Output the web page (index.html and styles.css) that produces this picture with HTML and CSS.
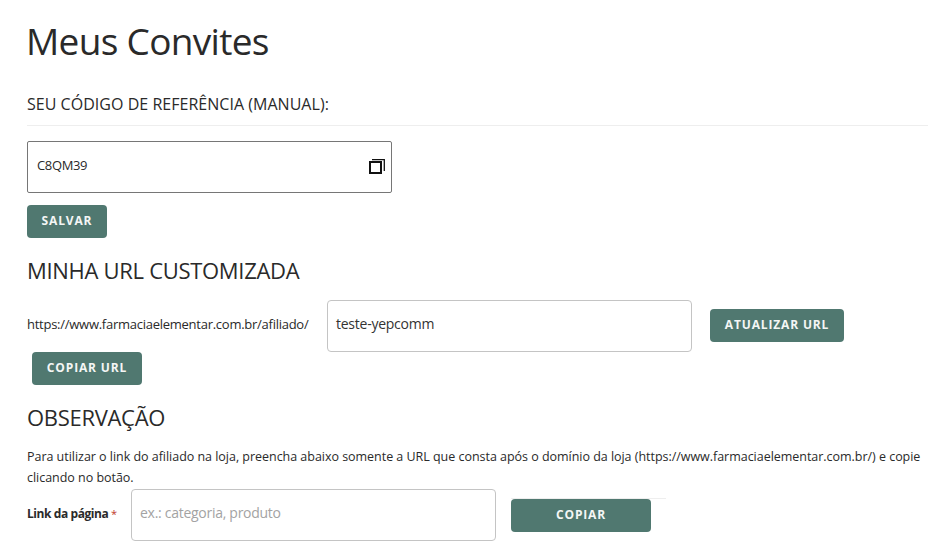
FILE: index.html
```html
<!DOCTYPE html>
<html lang="pt-BR">
<head>
<meta charset="utf-8">
<title>Meus Convites</title>
<link rel="stylesheet" href="styles.css">
</head>
<body>
<main class="page">
  <h1 class="title">Meus Convites</h1>
  <h2 class="label-head">SEU CÓDIGO DE REFERÊNCIA (MANUAL):</h2>
  <div class="code-box">
    <span class="code-text">C8QM39</span>
    <svg class="copy-icon" width="16" height="16" viewBox="0 0 16 16" aria-hidden="true">
      <path d="M1 3h11v11H1z" fill="none" stroke="#111" stroke-width="2"/>
      <path d="M3 .7h12.300V12" fill="none" stroke="#111" stroke-width="1.300"/>
    </svg>
  </div>
  <button class="btn btn-save">SALVAR</button>
  <h2 class="section-head first">MINHA URL CUSTOMIZADA</h2>
  <div class="url-row">
    <span class="url-base">https://www.farmaciaelementar.com.br/afiliado/</span>
    <div class="field url-field"><span class="value">teste-yepcomm</span></div>
    <button class="btn btn-update">ATUALIZAR URL</button>
  </div>
  <button class="btn btn-copy-url">COPIAR URL</button>
  <h2 class="section-head second">OBSERVAÇÃO</h2>
  <p class="note">Para utilizar o link do afiliado na loja, preencha abaixo somente a URL que consta após o domínio da loja (https://www.farmaciaelementar.com.br/) e copie clicando no botão.</p>
  <div class="link-row">
    <label class="link-label">Link da página <span class="req">*</span></label>
    <div class="field link-field"><span class="placeholder">ex.: categoria, produto</span></div>
    <div class="copy-wrap"><button class="btn btn-copy">COPIAR</button></div>
  </div>
</main>
</body>
</html>
```
FILE: styles.css
```css
* { box-sizing: border-box; }
html, body { margin: 0; padding: 0; background: #fff; }
body {
  font-family: "Open Sans", "Noto Sans", "Liberation Sans", sans-serif;
  color: #2a2a2a;
  overflow: hidden;
}
.page { width: 928px; height: 547px; padding: 0 0 0 27px; overflow: hidden; }
.title {
  margin: 0 0 0 -1px;
  padding-top: 16px;
  font-size: 37px;
  line-height: 50px;
  font-weight: 400;
  letter-spacing: -0.68px;
}
.label-head {
  margin: 26px 0 0;
  padding-bottom: 10px;
  font-size: 16px;
  line-height: 24px;
  font-weight: 400;
  letter-spacing: 0.03px;
  border-bottom: 1px solid #eee;
  height: 34px;
}
.code-box {
  width: 365px;
  height: 52px;
  margin-top: 15px;
  border: 1px solid #767676;
  border-radius: 2px;
  display: flex;
  align-items: flex-start;
  justify-content: space-between;
  padding: 14px 6px 0 9px;
}
.code-text { font-size: 13px; line-height: 18px; letter-spacing: -0.35px; }
.copy-icon { margin-top: 3px; }
.btn {
  display: block;
  height: 33px;
  border: 0;
  border-radius: 4px;
  background: #507870;
  color: #f4f6f5;
  font-family: inherit;
  font-size: 12px;
  font-weight: 700;
  letter-spacing: 0.85px;
  padding: 0 0 2px;
}
.btn-save { width: 80px; margin-top: 12px; }
.section-head {
  margin: 0;
  font-size: 22px;
  line-height: 30px;
  font-weight: 400;
  letter-spacing: -0.3px;
}
.section-head.first { margin-top: 17px; }
.section-head.second { margin-top: 17px; }
.url-row { display: flex; align-items: flex-start; margin-top: 15px; }
.url-base { width: 300px; padding-top: 14px; font-size: 13px; line-height: 20px; letter-spacing: -0.26px; }
.field {
  width: 365px;
  height: 52px;
  border: 1px solid #c4c4c4;
  border-radius: 4px;
  padding: 13px 8px 0;
  font-size: 14px;
  line-height: 20px;
}
.value { color: #333; letter-spacing: -0.25px; }
.btn-update { width: 134px; margin: 9px 0 0 18px; }
.btn-copy-url { width: 110px; margin-left: 5px; }
.note {
  margin: 14px 0 0;
  width: 900px;
  font-size: 12.500px;
  line-height: 21px;
  letter-spacing: -0.03px;
}
.link-row { display: flex; align-items: flex-start; margin-top: 1px; }
.link-label {
  width: 104px;
  padding-top: 16px;
  font-size: 12px;
  line-height: 18px;
  font-weight: 700;
  letter-spacing: -0.42px;
}
.req { color: #c0392b; font-weight: 400; font-size: 11px; }
.placeholder { color: #a3a3a3; letter-spacing: -0.28px; }
.copy-wrap { margin: 9px 0 0 15px; width: 155px; border-top: 1px solid #eee; }
.btn-copy { width: 140px; }
```
